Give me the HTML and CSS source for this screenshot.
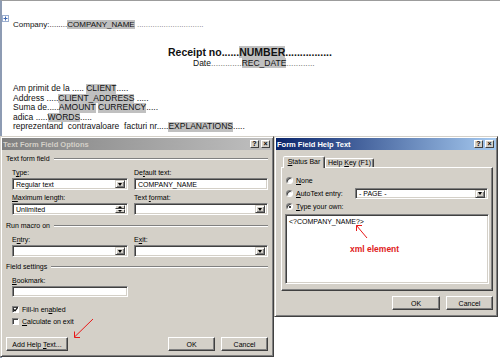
FILE: index.html
```html
<!DOCTYPE html>
<html lang="en">
  <head>
    <meta charset="UTF-8" />
    <title>Receipt template - form field</title>
    <link rel="stylesheet" href="styles.css">
  </head>
  <body>
    <div class="page">
      <div class="doc">
        <p class="company">Company:........<span class="fld">COMPANY_NAME</span> <span class="lead">..............................</span></p>
        <p class="receipt">Receipt no......<span class="fld">NUMBER</span>................</p>
        <p class="date">Date<span class="lead">.............</span><span class="fld">REC_DATE</span><span class="lead">............</span></p>
        <div class="lines">
          <p>Am primit de la ..... <span class="fld">CLIENT</span>.....</p>
          <p>Address .....<span class="fld">CLIENT_ADDRESS</span> .....</p>
          <p>Suma de.....<span class="fld">AMOUNT</span> <span class="fld">CURRENCY</span>.....</p>
          <p>adica .....<span class="fld">WORDS</span>.....</p>
          <p>reprezentand  contravaloare  facturi nr.....<span class="fld">EXPLANATIONS</span>.....</p>
        </div>
      </div>

      <svg class="anchor" width="7" height="7" viewBox="0 0 7 7">
        <rect x="0.5" y="0.5" width="6" height="6" fill="#fff" stroke="#9aaed0"/>
        <path d="M3.5 1.5v4M1.5 3.5h4" stroke="#3d66b0" stroke-width="1"/>
      </svg>

      <!-- Text Form Field Options (inactive window) -->
      <div class="dlg dlg-options">
        <div class="title inactive">
          <span class="name">Text Form Field Options</span>
          <span class="tbtn">?</span>
          <span class="tbtn">×</span>
        </div>
        <div class="opt-body">
          <div class="group-head first">Text form field</div>
          <div class="group">
            <div class="grid">
              <div class="field">
                <label>T<u>y</u>pe:</label>
                <div class="box">Regular text<span class="drop"></span></div>
              </div>
              <div class="field">
                <label>De<u>f</u>ault text:</label>
                <div class="box">COMPANY_NAME</div>
              </div>
              <div class="field">
                <label><u>M</u>aximum length:</label>
                <div class="box">Unlimited<span class="spin"><i class="up"></i><i class="down"></i></span></div>
              </div>
              <div class="field">
                <label>Text <u>f</u>ormat:</label>
                <div class="box"><span class="drop"></span></div>
              </div>
            </div>
          </div>

          <div class="group-head g2">Run macro on</div>
          <div class="group">
            <div class="grid">
              <div class="field">
                <label>E<u>n</u>try:</label>
                <div class="box"><span class="drop"></span></div>
              </div>
              <div class="field">
                <label>E<u>x</u>it:</label>
                <div class="box"><span class="drop"></span></div>
              </div>
            </div>
          </div>

          <div class="group-head g3">Field settings</div>
          <div class="group">
            <div class="field">
              <label><u>B</u>ookmark:</label>
              <div class="box short"></div>
            </div>
            <div class="check first">
              <span class="cbox">
                <svg width="5" height="5" viewBox="0 0 5 5"><path d="M0.5 2.2l1.5 1.6 2.6-3.2" fill="none" stroke="#000" stroke-width="1.1"/></svg>
              </span>
              <span>Fill-in en<u>a</u>bled</span>
            </div>
            <div class="check">
              <span class="cbox"></span>
              <span><u>C</u>alculate on exit</span>
            </div>
          </div>

          <div class="btn-row">
            <span class="btn add"><span>Add Help <u>T</u>ext...</span></span>
            <span class="btn ok">OK</span>
            <span class="btn cancel">Cancel</span>
          </div>
        </div>
      </div>

      <!-- Form Field Help Text (active window) -->
      <div class="dlg dlg-help">
        <div class="title active">
          <span class="name">Form Field Help Text</span>
          <span class="tbtn">?</span>
          <span class="tbtn">×</span>
        </div>
        <div class="help-body">
          <div class="tabs">
            <span class="tab sel"><u>S</u>tatus Bar</span>
            <span class="tab">Help <u>K</u>ey (F1)</span>
          </div>
          <div class="panel">
            <div class="radio-row">
              <span class="radio"></span>
              <span><u>N</u>one</span>
            </div>
            <div class="radio-row">
              <span class="radio"></span>
              <span><u>A</u>utoText entry:</span>
              <div class="box page-select">- PAGE -<span class="drop"></span></div>
            </div>
            <div class="radio-row">
              <span class="radio on"></span>
              <span><u>T</u>ype your own:</span>
            </div>
            <div class="textarea">
              &lt;?COMPANY_NAME?&gt;
              <span class="note">xml element</span>
            </div>
          </div>
          <div class="btn-row">
            <span class="btn ok2">OK</span>
            <span class="btn cancel">Cancel</span>
          </div>
        </div>
      </div>

      <svg class="arrows" width="500" height="358" viewBox="0 0 500 358">
        <g fill="none" stroke="#e81818" stroke-width="1">
          <path d="M93 319L74.5 337"/>
          <path d="M74.5 331.5V337.5H80"/>
          <path d="M367 238L356.5 225.5"/>
          <path d="M356.5 231V225.5H362"/>
        </g>
      </svg>
    </div>
  </body>
</html>
```
FILE: styles.css
```css
body {
  margin: 0;
  padding: 0;
  background: #fff;
}

.page {
  position: relative;
  width: 500px;
  height: 358px;
  overflow: hidden;
  background: #fff;
}

/* document behind the dialogs */
.doc {
  height: 100%;
  box-sizing: border-box;
  border-top: 1px solid #9c9c9c;
  border-left: 2px solid #8d9bb3;
  padding: 19px 0 0 11px;
  font-family: "Liberation Sans", Arial, sans-serif;
  color: #111;
}

.doc p {
  margin: 0;
  white-space: pre;
}

.company {
  font-size: 8px;
  line-height: 10px;
}

.receipt {
  margin-top: 16px !important;
  padding-left: 155px;
  font-size: 10.5px;
  font-weight: bold;
  line-height: 12px;
}

.date {
  padding-left: 180px;
  font-size: 8.5px;
  line-height: 10px;
}

.lines {
  margin-top: 16px;
  font-size: 8.5px;
  line-height: 9.6px;
}

.fld {
  background: #c0c0c0;
}

.lines .fld {
  display: inline-block;
  line-height: 9.6px;
  vertical-align: top;
}

.lead {
  color: #777;
}

.anchor {
  position: absolute;
  left: 2px;
  top: 15px;
}

/* windows */
.dlg {
  position: absolute;
  top: 136px;
  box-sizing: border-box;
  display: flex;
  flex-direction: column;
  padding: 1px;
  background: #d4d0c8;
  border: 1px solid;
  border-color: #d4d0c8 #404040 #404040 #d4d0c8;
  box-shadow: inset 1px 1px #fff, inset -1px -1px #808080;
  font-family: "Liberation Sans", Arial, sans-serif;
  font-size: 7px;
  color: #000;
}

.dlg-options {
  left: 0;
  width: 274px;
  height: 221px;
}

.dlg-help {
  left: 274px;
  width: 224px;
  height: 181px;
}

.title {
  display: flex;
  align-items: center;
  height: 12px;
  padding: 0 2px 0 1px;
  font-size: 7.5px;
  font-weight: bold;
}

.title.inactive {
  background: linear-gradient(to right, #808080, #c0c0c0);
  color: #d4d0c8;
}

.title.active {
  background: linear-gradient(to right, #0a246a, #a6caf0);
  color: #fff;
}

.title .name {
  flex: 1;
}

.tbtn {
  width: 9px;
  height: 8px;
  box-sizing: border-box;
  background: #d4d0c8;
  border: 1px solid;
  border-color: #fff #404040 #404040 #fff;
  color: #000;
  font-size: 7px;
  line-height: 6px;
  text-align: center;
}

.tbtn + .tbtn {
  margin-left: 2px;
}

u {
  text-decoration-thickness: 1px;
  text-underline-offset: 1px;
}

/* options dialog */
.opt-body {
  padding: 0 4px;
}

.group-head {
  display: flex;
  align-items: center;
  gap: 4px;
  line-height: 8px;
}

.group-head::after {
  content: "";
  flex: 1;
  border-top: 1px solid #808080;
  border-bottom: 1px solid #fff;
}

.group-head.first {
  margin-top: 5px;
}

.group-head.g2 {
  margin-top: 7px;
}

.group-head.g3 {
  margin-top: 6px;
}

.group {
  padding: 5px 0 0 6px;
}

.grid {
  display: grid;
  grid-template-columns: 116px 134px;
  column-gap: 6px;
  row-gap: 3px;
}

.field label {
  display: block;
  line-height: 9px;
  margin-bottom: 1px;
}

.box {
  display: flex;
  align-items: center;
  height: 12px;
  box-sizing: border-box;
  padding: 0 2px 0 3px;
  background: #fff;
  border: 1px solid;
  border-color: #808080 #fff #fff #808080;
  box-shadow: inset 1px 1px #404040, inset -1px -1px #d4d0c8;
  white-space: nowrap;
}

.box.short {
  width: 116px;
  height: 11px;
}

.drop,
.spin {
  margin-left: auto;
  width: 10px;
  height: 8px;
  box-sizing: border-box;
}

.drop {
  display: flex;
  align-items: center;
  justify-content: center;
  background: #d4d0c8;
  border: 1px solid;
  border-color: #d4d0c8 #404040 #404040 #d4d0c8;
  box-shadow: inset 1px 1px #fff, inset -1px -1px #808080;
}

.drop::before {
  content: "";
  border-left: 2.5px solid transparent;
  border-right: 2.5px solid transparent;
  border-top: 3px solid #000;
}

.spin {
  display: flex;
  flex-direction: column;
}

.spin i {
  flex: 1;
  display: flex;
  align-items: center;
  justify-content: center;
  background: #d4d0c8;
  border: 1px solid;
  border-color: #fff #404040 #404040 #fff;
  box-sizing: border-box;
}

.spin .up::before {
  content: "";
  border-left: 2px solid transparent;
  border-right: 2px solid transparent;
  border-bottom: 2px solid #000;
}

.spin .down::before {
  content: "";
  border-left: 2px solid transparent;
  border-right: 2px solid transparent;
  border-top: 2px solid #000;
}

.check {
  display: flex;
  align-items: center;
  gap: 3px;
  height: 12px;
}

.check.first {
  margin-top: 6px;
}

.cbox {
  display: flex;
  align-items: center;
  justify-content: center;
  width: 7px;
  height: 7px;
  box-sizing: border-box;
  background: #fff;
  border: 1px solid;
  border-color: #808080 #fff #fff #808080;
  box-shadow: inset 1px 1px #404040;
}

.btn-row {
  display: flex;
  gap: 6px;
  margin-top: 10px;
}

.btn {
  display: flex;
  align-items: center;
  justify-content: center;
  height: 14px;
  box-sizing: border-box;
  background: #d4d0c8;
  border: 1px solid;
  border-color: #fff #404040 #404040 #fff;
  box-shadow: inset -1px -1px #808080, inset 1px 1px #d4d0c8;
  white-space: pre;
}

.btn.add {
  width: 62px;
}

.btn.ok {
  margin-left: auto;
  width: 47px;
}

.btn.ok2 {
  margin-left: auto;
  width: 48px;
}

.btn.cancel {
  width: 47px;
}

/* help text dialog */
.help-body {
  padding: 0 3px 0 5px;
}

.help-body .btn-row {
  margin-top: 5px;
}

.tabs {
  display: flex;
  align-items: flex-end;
  height: 11px;
  margin-top: 6px;
  padding-left: 2px;
  position: relative;
  z-index: 1;
}

.tab {
  height: 9px;
  box-sizing: border-box;
  border: 1px solid;
  border-bottom: none;
  border-color: #fff #404040 transparent #fff;
  border-radius: 2px 2px 0 0;
  box-shadow: inset -1px 0 #808080;
  line-height: 8px;
  text-align: center;
  width: 49px;
}

.tab.sel {
  width: 42px;
  height: 12px;
  margin-bottom: -1px;
  background: #d4d0c8;
  line-height: 10px;
}

.panel {
  height: 124px;
  box-sizing: border-box;
  padding: 6px 3px 0 3px;
  border: 1px solid;
  border-color: #fff #404040 #404040 #fff;
  box-shadow: inset -1px -1px #808080;
}

.radio-row {
  display: flex;
  align-items: center;
  gap: 3px;
  height: 13px;
}

.radio {
  position: relative;
  width: 7px;
  height: 7px;
  margin-left: 1px;
  box-sizing: border-box;
  border-radius: 50%;
  background: #fff;
  border: 1px solid;
  border-color: #808080 #fff #fff #808080;
  box-shadow: inset 1px 1px #404040;
}

.radio.on::after {
  content: "";
  position: absolute;
  left: 1.5px;
  top: 1.5px;
  width: 2px;
  height: 2px;
  border-radius: 50%;
  background: #000;
}

.page-select {
  margin-left: auto;
  margin-right: 1px;
  width: 133px;
  height: 11px;
}

.textarea {
  position: relative;
  height: 70px;
  margin-top: 1px;
  box-sizing: border-box;
  padding: 2px 3px;
  background: #fff;
  border: 1px solid;
  border-color: #808080 #fff #fff #808080;
  box-shadow: inset 1px 1px #404040, inset -1px -1px #d4d0c8;
  line-height: 9px;
}

.note {
  position: absolute;
  left: 64px;
  top: 29px;
  color: #e02020;
  font-size: 8.5px;
  font-weight: bold;
  line-height: 10px;
}

.arrows {
  position: absolute;
  left: 0;
  top: 0;
  pointer-events: none;
}
```
